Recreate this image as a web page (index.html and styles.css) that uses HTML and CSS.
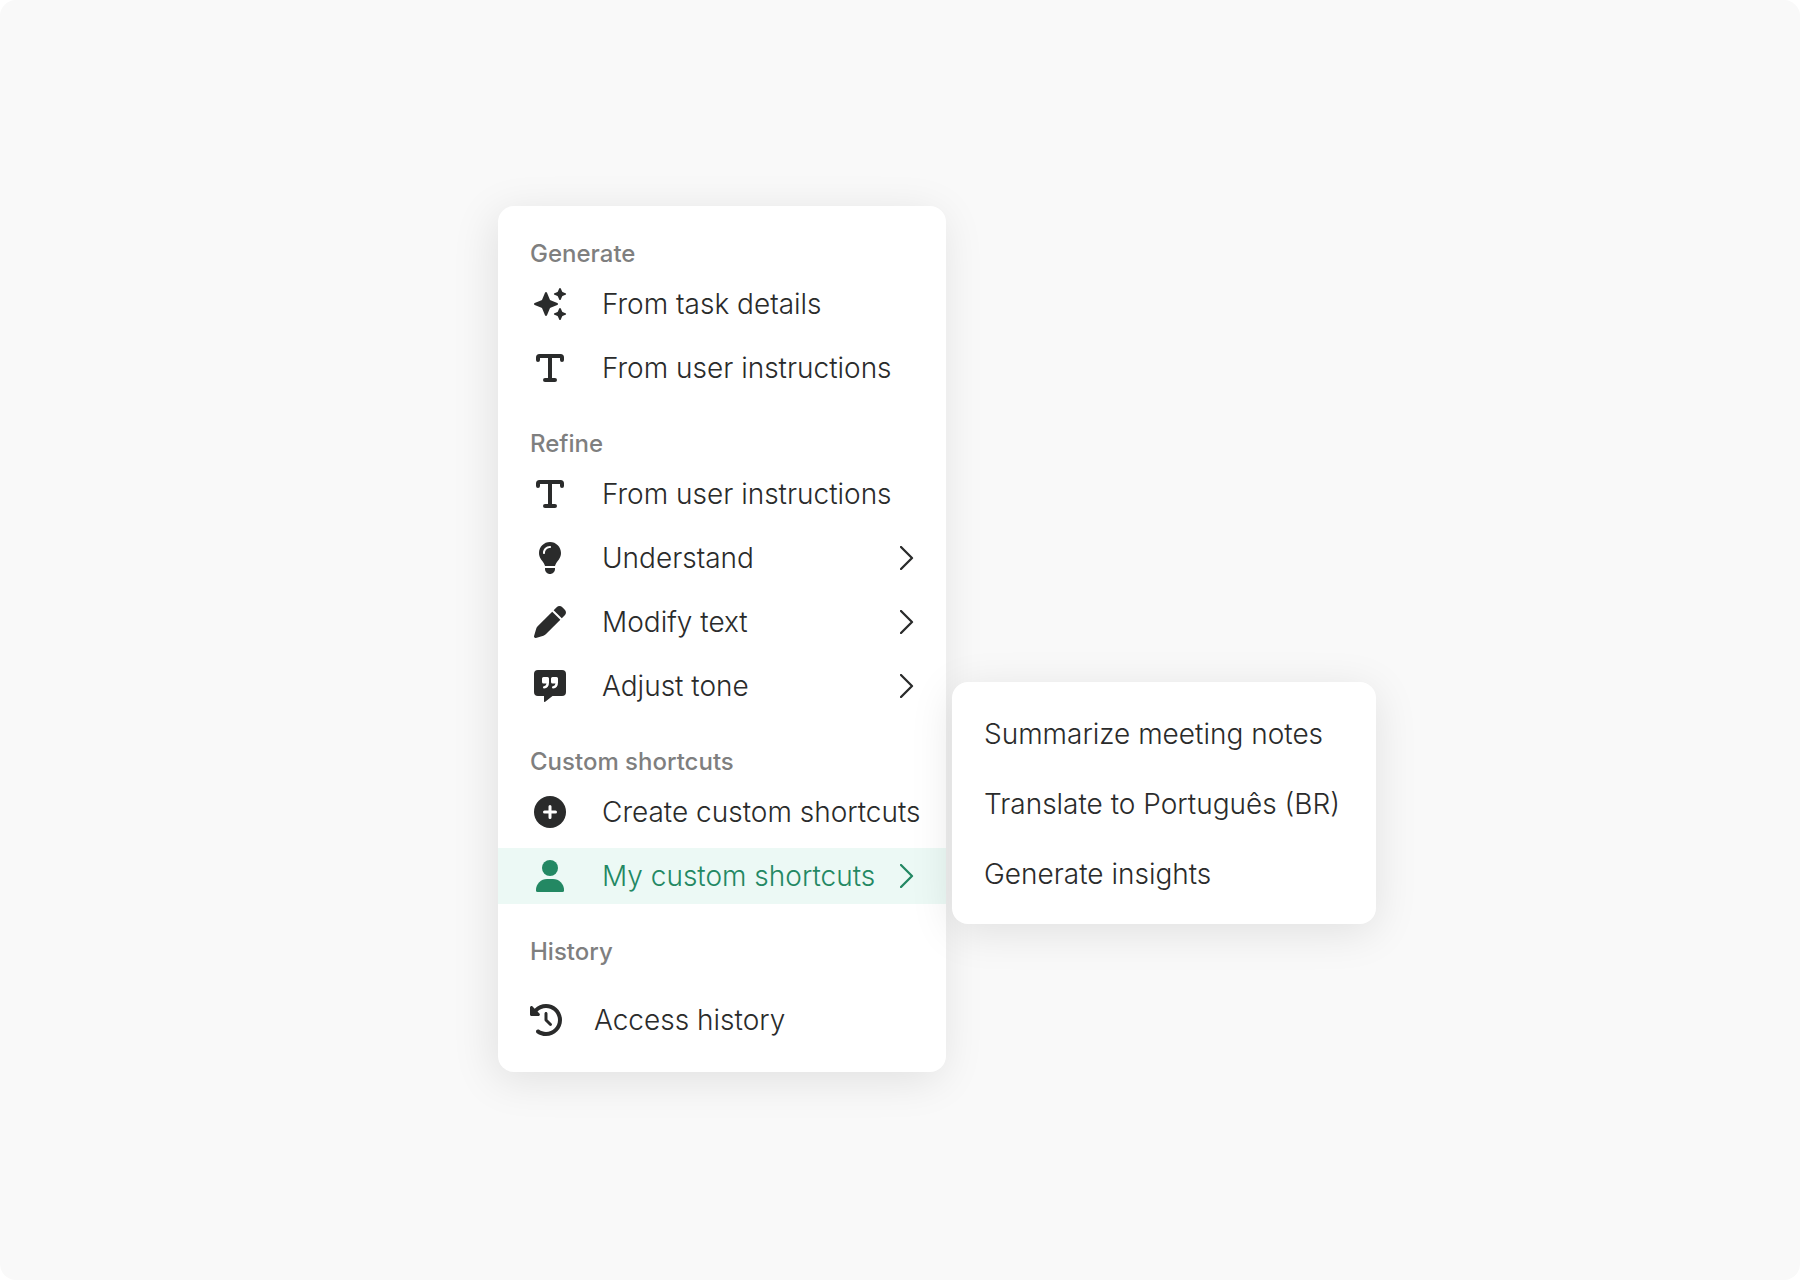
FILE: index.html
```html
<!DOCTYPE html>
<html lang="en">
<head>
  <meta charset="UTF-8">
  <title>Shortcuts menu</title>
  <link rel="stylesheet" href="styles.css">
</head>
<body>
  <!-- shared icons -->
  <svg class="sprite" aria-hidden="true">
    <symbol id="icon-sparkles" viewBox="0 0 32 32">
      <path d="M11 4.700c.4-1 1.600-1 2 0l2.800 6.900c.1.300.4.600.7.700l6.800 2.700c1 .4 1 1.600 0 2l-6.800 2.700c-.3.100-.6.400-.7.700l-2.800 6.900c-.4 1-1.600 1-2 0l-2.800-6.900c-.1-.3-.4-.6-.7-.7L.7 17c-1-.4-1-1.600 0-2l6.800-2.700c.3-.1.600-.4.700-.7z"/>
      <path d="M25.200.6c.3-.8 1.300-.8 1.600 0l1.300 3c.1.200.2.300.4.400l3 1.200c.8.300.8 1.300 0 1.600l-3 1.200c-.2.100-.3.200-.4.400l-1.300 3c-.3.800-1.300.8-1.600 0l-1.300-3c-.1-.2-.2-.3-.4-.4l-3-1.200c-.8-.3-.8-1.300 0-1.600l3-1.200c.2-.1.300-.2.400-.4z"/>
      <path d="M25.200 20.600c.3-.8 1.300-.8 1.600 0l1.300 3c.1.200.2.300.4.400l3 1.200c.8.300.8 1.300 0 1.600l-3 1.200c-.2.100-.3.200-.4.400l-1.300 3c-.3.800-1.300.8-1.600 0l-1.300-3c-.1-.2-.2-.3-.4-.4l-3-1.200c-.8-.3-.8-1.300 0-1.600l3-1.200c.2-.1.300-.2.400-.4z"/>
    </symbol>
    <symbol id="icon-text" viewBox="0 0 32 32">
      <path d="M4 8V5.500Q4 4 5.500 4H26.500Q28 4 28 5.500V8M16 4V28M11 28H21" fill="none" stroke="currentColor" stroke-width="4" stroke-linecap="round"/>
    </symbol>
    <symbol id="icon-bulb" viewBox="0 0 384 512">
      <path d="M272 384c9.600-31.900 29.500-59.100 49.200-86.200c5.200-7.100 10.400-14.200 15.400-21.400c19.800-28.500 31.400-63 31.400-100.300C368 78.800 289.200 0 192 0S16 78.800 16 176c0 37.300 11.600 71.900 31.400 100.300c5 7.200 10.200 14.300 15.400 21.400c19.800 27.100 39.700 54.400 49.200 86.200H272zM192 512c44.200 0 80-35.800 80-80V416H112v16c0 44.200 35.800 80 80 80zM112 176c0 8.800-7.200 16-16 16s-16-7.200-16-16c0-61.900 50.100-112 112-112c8.800 0 16 7.200 16 16s-7.200 16-16 16c-44.200 0-80 35.800-80 80z"/>
    </symbol>
    <symbol id="icon-pen" viewBox="0 0 512 512">
      <path d="M362.700 19.300L314.300 67.700 444.300 197.700l48.400-48.400c25-25 25-65.500 0-90.500L453.300 19.300c-25-25-65.500-25-90.500 0zM291.700 90.300L58.600 323.500c-10.400 10.400-18 23.300-22.200 37.400L1 481.200C-1.500 489.700 .8 498.800 7 505s15.300 8.500 23.700 6.100l120.300-35.400c14.100-4.200 27-11.800 37.400-22.200L421.700 220.300 291.700 90.300z"/>
    </symbol>
    <symbol id="icon-quote" viewBox="0 0 32 32">
      <path fill-rule="evenodd" d="M4 0H28a4 4 0 0 1 4 4V22a4 4 0 0 1-4 4H18.500L11.200 31.800A.8.8 0 0 1 10 31.200V26H4a4 4 0 0 1-4-4V4a4 4 0 0 1 4-4zM9.500 7A1.500 1.500 0 0 0 8 8.500v3.500A1.500 1.500 0 0 0 9.500 13.500H12.500Q12.300 15.800 10 16.300A1 1 0 0 0 10.200 18.500Q15 18 15 12.500V8.500A1.500 1.500 0 0 0 13.500 7zM18.500 7A1.500 1.500 0 0 0 17 8.500v3.500A1.500 1.500 0 0 0 18.500 13.500H21.500Q21.300 15.800 19 16.300A1 1 0 0 0 19.200 18.500Q24 18 24 12.500V8.500A1.500 1.500 0 0 0 22.500 7z"/>
    </symbol>
    <symbol id="icon-plus" viewBox="0 0 32 32">
      <circle cx="16" cy="16" r="16"/>
      <path d="M16 10.500V21.500M10.500 16H21.500" fill="none" stroke="#fff" stroke-width="3" stroke-linecap="round"/>
    </symbol>
    <symbol id="icon-user" viewBox="0 0 32 32">
      <circle cx="16" cy="8" r="8"/>
      <path d="M13 19H19A11 11 0 0 1 30 30V30.500A1.500 1.500 0 0 1 28.500 32H3.500A1.500 1.500 0 0 1 2 30.500V30A11 11 0 0 1 13 19z"/>
    </symbol>
    <symbol id="icon-history" viewBox="0 0 512 512">
      <path d="M75 75L41 41C25.900 25.900 0 36.600 0 57.900V168c0 13.300 10.700 24 24 24H134.100c21.400 0 32.100-25.900 17-41l-30.800-30.800C155 85.500 203 64 256 64c106 0 192 86 192 192s-86 192-192 192c-40.800 0-78.600-12.700-109.700-34.400c-14.500-10.100-34.400-6.600-44.600 7.900s-6.600 34.400 7.900 44.600C151.200 495 201.700 512 256 512c141.400 0 256-114.600 256-256S397.400 0 256 0C185.300 0 121.300 28.700 75 75zm181 53c-13.300 0-24 10.700-24 24V256c0 6.400 2.500 12.500 7 17l72 72c9.400 9.400 24.600 9.400 33.900 0s9.400-24.600 0-33.900l-65-65V152c0-13.300-10.700-24-24-24z"/>
    </symbol>
    <symbol id="icon-chevron" viewBox="0 0 14 24">
      <path d="M1 1L12 12L1 23" fill="none" stroke="currentColor" stroke-width="2.300" stroke-linecap="round" stroke-linejoin="round"/>
    </symbol>
  </svg>

  <main class="stage">
    <nav class="menu">
      <section class="group">
        <h2>Generate</h2>
        <ul>
          <li><button class="item"><svg class="icon"><use href="#icon-sparkles"/></svg>From task details</button></li>
          <li><button class="item"><svg class="icon"><use href="#icon-text"/></svg>From user instructions</button></li>
        </ul>
      </section>

      <section class="group">
        <h2>Refine</h2>
        <ul>
          <li><button class="item"><svg class="icon"><use href="#icon-text"/></svg>From user instructions</button></li>
          <li><button class="item"><svg class="icon"><use href="#icon-bulb"/></svg>Understand<svg class="chevron"><use href="#icon-chevron"/></svg></button></li>
          <li><button class="item"><svg class="icon"><use href="#icon-pen"/></svg>Modify text<svg class="chevron"><use href="#icon-chevron"/></svg></button></li>
          <li><button class="item"><svg class="icon"><use href="#icon-quote"/></svg>Adjust tone<svg class="chevron"><use href="#icon-chevron"/></svg></button></li>
        </ul>
      </section>

      <section class="group">
        <h2>Custom shortcuts</h2>
        <ul>
          <li><button class="item"><svg class="icon"><use href="#icon-plus"/></svg>Create custom shortcuts</button></li>
          <li class="has-submenu">
            <button class="item active"><svg class="icon"><use href="#icon-user"/></svg>My custom shortcuts<svg class="chevron"><use href="#icon-chevron"/></svg></button>
            <ul class="submenu">
              <li><button>Summarize meeting notes</button></li>
              <li><button>Translate to Português (BR)</button></li>
              <li><button>Generate insights</button></li>
            </ul>
          </li>
        </ul>
      </section>

      <section class="group history">
        <h2>History</h2>
        <ul>
          <li><button class="item"><svg class="icon"><use href="#icon-history"/></svg>Access history</button></li>
        </ul>
      </section>
    </nav>
  </main>
</body>
</html>
```
FILE: styles.css
```css
* {
  box-sizing: border-box;
}
body {
  margin: 0;
  background: #fff;
  color: #2a2b2b;
  font-family: Inter, "Liberation Sans", sans-serif;
}
.sprite {
  display: none;
}
.stage {
  display: flex;
  justify-content: center;
  align-items: center;
  min-height: 100vh;
  padding: 32px 356px 34px 0;
  background: #f9f9f9;
  border-radius: 16px;
}

/* main menu */
.menu {
  width: 448px;
  padding: 32px 0 24px;
  background: #fff;
  border-radius: 16px;
  box-shadow: -4px 8px 44px rgba(0, 0, 0, 0.1);
}
ul {
  margin: 0;
  padding: 0;
  list-style: none;
}
.group + .group {
  margin-top: 32px;
}
.group h2 {
  margin: 0 0 6px;
  padding: 0 32px;
  font-size: 24px;
  font-weight: 500;
  line-height: 32px;
  color: #7f7f7f;
}
.group li + li {
  margin-top: 8px;
}
button {
  border: none;
  background: none;
  color: inherit;
  font-family: inherit;
  font-size: 28px;
  font-weight: 350;
  text-align: left;
  white-space: nowrap;
  cursor: pointer;
}
.item {
  display: flex;
  align-items: center;
  gap: 32px;
  width: 100%;
  height: 56px;
  padding: 0 32px;
}
.item:hover,
.item.active {
  background: #ecf9f5;
  color: #238863;
}
.icon {
  flex: none;
  width: 40px;
  height: 32px;
  fill: currentColor;
}
.chevron {
  flex: none;
  width: 14px;
  height: 24px;
  margin-left: auto;
}
.item.active {
  gap: 0;
}
.item.active .icon {
  margin-right: 32px;
}
.history h2 {
  margin-bottom: 24px;
}
.history .icon {
  width: 32px;
}

/* submenu */
.has-submenu {
  position: relative;
}
.submenu {
  position: absolute;
  left: calc(100% + 6px);
  bottom: -20px;
  width: 424px;
  padding: 17px 0 15px;
  background: #fff;
  border-radius: 16px;
  box-shadow: 0 8px 44px rgba(0, 0, 0, 0.1);
}
.group .submenu li + li {
  margin-top: 0;
}
.submenu button {
  width: 100%;
  height: 70px;
  padding: 0 32px;
}
```
